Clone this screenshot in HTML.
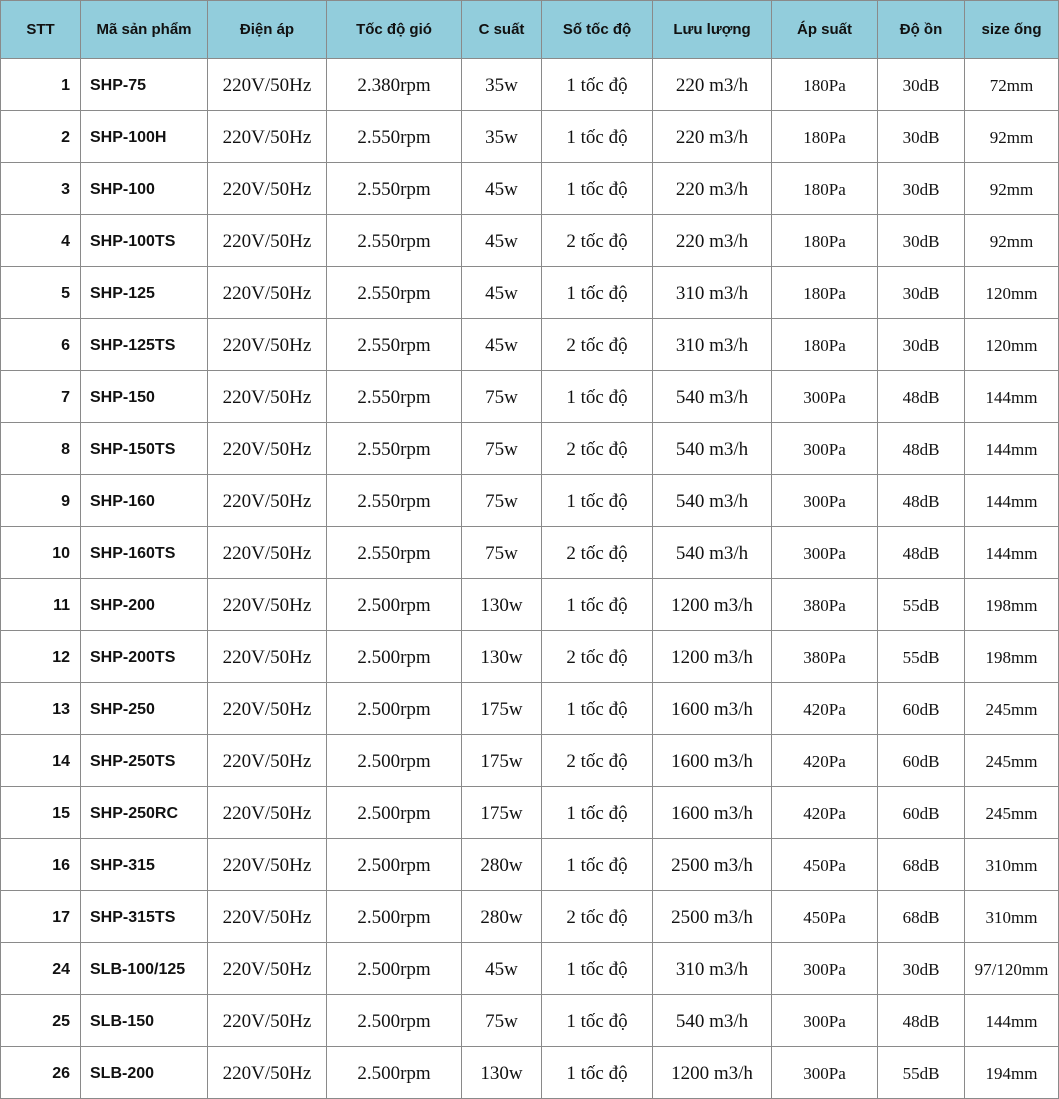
<!DOCTYPE html><html><head><meta charset="utf-8"><style>
body{margin:0;background:#fff;width:1059px;height:1099px;overflow:hidden}
table{border-collapse:collapse;table-layout:fixed;position:absolute;left:0;top:0}
td,th{border:1px solid #8a8a8a;padding:0;height:51px;text-align:center;vertical-align:middle;font-family:"Liberation Serif",serif;font-size:19px;color:#111}
td{padding-top:2px;height:49px}
th{background:#92cddc;font-family:"Liberation Sans",sans-serif;font-weight:bold;font-size:15px;height:57px}
td.n{text-align:right;padding-right:10px;font-family:"Liberation Sans",sans-serif;font-weight:bold;font-size:16px}
td.c{text-align:left;padding-left:9px;font-family:"Liberation Sans",sans-serif;font-weight:bold;font-size:16px}
td.s{font-size:17px}
</style></head><body>
<table>
<colgroup><col style="width:80px"><col style="width:127px"><col style="width:119px"><col style="width:135px"><col style="width:80px"><col style="width:111px"><col style="width:119px"><col style="width:106px"><col style="width:87px"><col style="width:94px"></colgroup>
<tr><th>STT</th><th>Mã sản phẩm</th><th>Điện áp</th><th>Tốc độ gió</th><th>C suất</th><th>Số tốc độ</th><th>Lưu lượng</th><th>Áp suất</th><th>Độ ồn</th><th>size ống</th></tr>
<tr><td class="n">1</td><td class="c">SHP-75</td><td>220V/50Hz</td><td>2.380rpm</td><td>35w</td><td>1 tốc độ</td><td>220 m3/h</td><td class="s">180Pa</td><td class="s">30dB</td><td class="s">72mm</td></tr>
<tr><td class="n">2</td><td class="c">SHP-100H</td><td>220V/50Hz</td><td>2.550rpm</td><td>35w</td><td>1 tốc độ</td><td>220 m3/h</td><td class="s">180Pa</td><td class="s">30dB</td><td class="s">92mm</td></tr>
<tr><td class="n">3</td><td class="c">SHP-100</td><td>220V/50Hz</td><td>2.550rpm</td><td>45w</td><td>1 tốc độ</td><td>220 m3/h</td><td class="s">180Pa</td><td class="s">30dB</td><td class="s">92mm</td></tr>
<tr><td class="n">4</td><td class="c">SHP-100TS</td><td>220V/50Hz</td><td>2.550rpm</td><td>45w</td><td>2 tốc độ</td><td>220 m3/h</td><td class="s">180Pa</td><td class="s">30dB</td><td class="s">92mm</td></tr>
<tr><td class="n">5</td><td class="c">SHP-125</td><td>220V/50Hz</td><td>2.550rpm</td><td>45w</td><td>1 tốc độ</td><td>310 m3/h</td><td class="s">180Pa</td><td class="s">30dB</td><td class="s">120mm</td></tr>
<tr><td class="n">6</td><td class="c">SHP-125TS</td><td>220V/50Hz</td><td>2.550rpm</td><td>45w</td><td>2 tốc độ</td><td>310 m3/h</td><td class="s">180Pa</td><td class="s">30dB</td><td class="s">120mm</td></tr>
<tr><td class="n">7</td><td class="c">SHP-150</td><td>220V/50Hz</td><td>2.550rpm</td><td>75w</td><td>1 tốc độ</td><td>540 m3/h</td><td class="s">300Pa</td><td class="s">48dB</td><td class="s">144mm</td></tr>
<tr><td class="n">8</td><td class="c">SHP-150TS</td><td>220V/50Hz</td><td>2.550rpm</td><td>75w</td><td>2 tốc độ</td><td>540 m3/h</td><td class="s">300Pa</td><td class="s">48dB</td><td class="s">144mm</td></tr>
<tr><td class="n">9</td><td class="c">SHP-160</td><td>220V/50Hz</td><td>2.550rpm</td><td>75w</td><td>1 tốc độ</td><td>540 m3/h</td><td class="s">300Pa</td><td class="s">48dB</td><td class="s">144mm</td></tr>
<tr><td class="n">10</td><td class="c">SHP-160TS</td><td>220V/50Hz</td><td>2.550rpm</td><td>75w</td><td>2 tốc độ</td><td>540 m3/h</td><td class="s">300Pa</td><td class="s">48dB</td><td class="s">144mm</td></tr>
<tr><td class="n">11</td><td class="c">SHP-200</td><td>220V/50Hz</td><td>2.500rpm</td><td>130w</td><td>1 tốc độ</td><td>1200 m3/h</td><td class="s">380Pa</td><td class="s">55dB</td><td class="s">198mm</td></tr>
<tr><td class="n">12</td><td class="c">SHP-200TS</td><td>220V/50Hz</td><td>2.500rpm</td><td>130w</td><td>2 tốc độ</td><td>1200 m3/h</td><td class="s">380Pa</td><td class="s">55dB</td><td class="s">198mm</td></tr>
<tr><td class="n">13</td><td class="c">SHP-250</td><td>220V/50Hz</td><td>2.500rpm</td><td>175w</td><td>1 tốc độ</td><td>1600 m3/h</td><td class="s">420Pa</td><td class="s">60dB</td><td class="s">245mm</td></tr>
<tr><td class="n">14</td><td class="c">SHP-250TS</td><td>220V/50Hz</td><td>2.500rpm</td><td>175w</td><td>2 tốc độ</td><td>1600 m3/h</td><td class="s">420Pa</td><td class="s">60dB</td><td class="s">245mm</td></tr>
<tr><td class="n">15</td><td class="c">SHP-250RC</td><td>220V/50Hz</td><td>2.500rpm</td><td>175w</td><td>1 tốc độ</td><td>1600 m3/h</td><td class="s">420Pa</td><td class="s">60dB</td><td class="s">245mm</td></tr>
<tr><td class="n">16</td><td class="c">SHP-315</td><td>220V/50Hz</td><td>2.500rpm</td><td>280w</td><td>1 tốc độ</td><td>2500 m3/h</td><td class="s">450Pa</td><td class="s">68dB</td><td class="s">310mm</td></tr>
<tr><td class="n">17</td><td class="c">SHP-315TS</td><td>220V/50Hz</td><td>2.500rpm</td><td>280w</td><td>2 tốc độ</td><td>2500 m3/h</td><td class="s">450Pa</td><td class="s">68dB</td><td class="s">310mm</td></tr>
<tr><td class="n">24</td><td class="c">SLB-100/125</td><td>220V/50Hz</td><td>2.500rpm</td><td>45w</td><td>1 tốc độ</td><td>310 m3/h</td><td class="s">300Pa</td><td class="s">30dB</td><td class="s">97/120mm</td></tr>
<tr><td class="n">25</td><td class="c">SLB-150</td><td>220V/50Hz</td><td>2.500rpm</td><td>75w</td><td>1 tốc độ</td><td>540 m3/h</td><td class="s">300Pa</td><td class="s">48dB</td><td class="s">144mm</td></tr>
<tr><td class="n">26</td><td class="c">SLB-200</td><td>220V/50Hz</td><td>2.500rpm</td><td>130w</td><td>1 tốc độ</td><td>1200 m3/h</td><td class="s">300Pa</td><td class="s">55dB</td><td class="s">194mm</td></tr>
</table></body></html>
